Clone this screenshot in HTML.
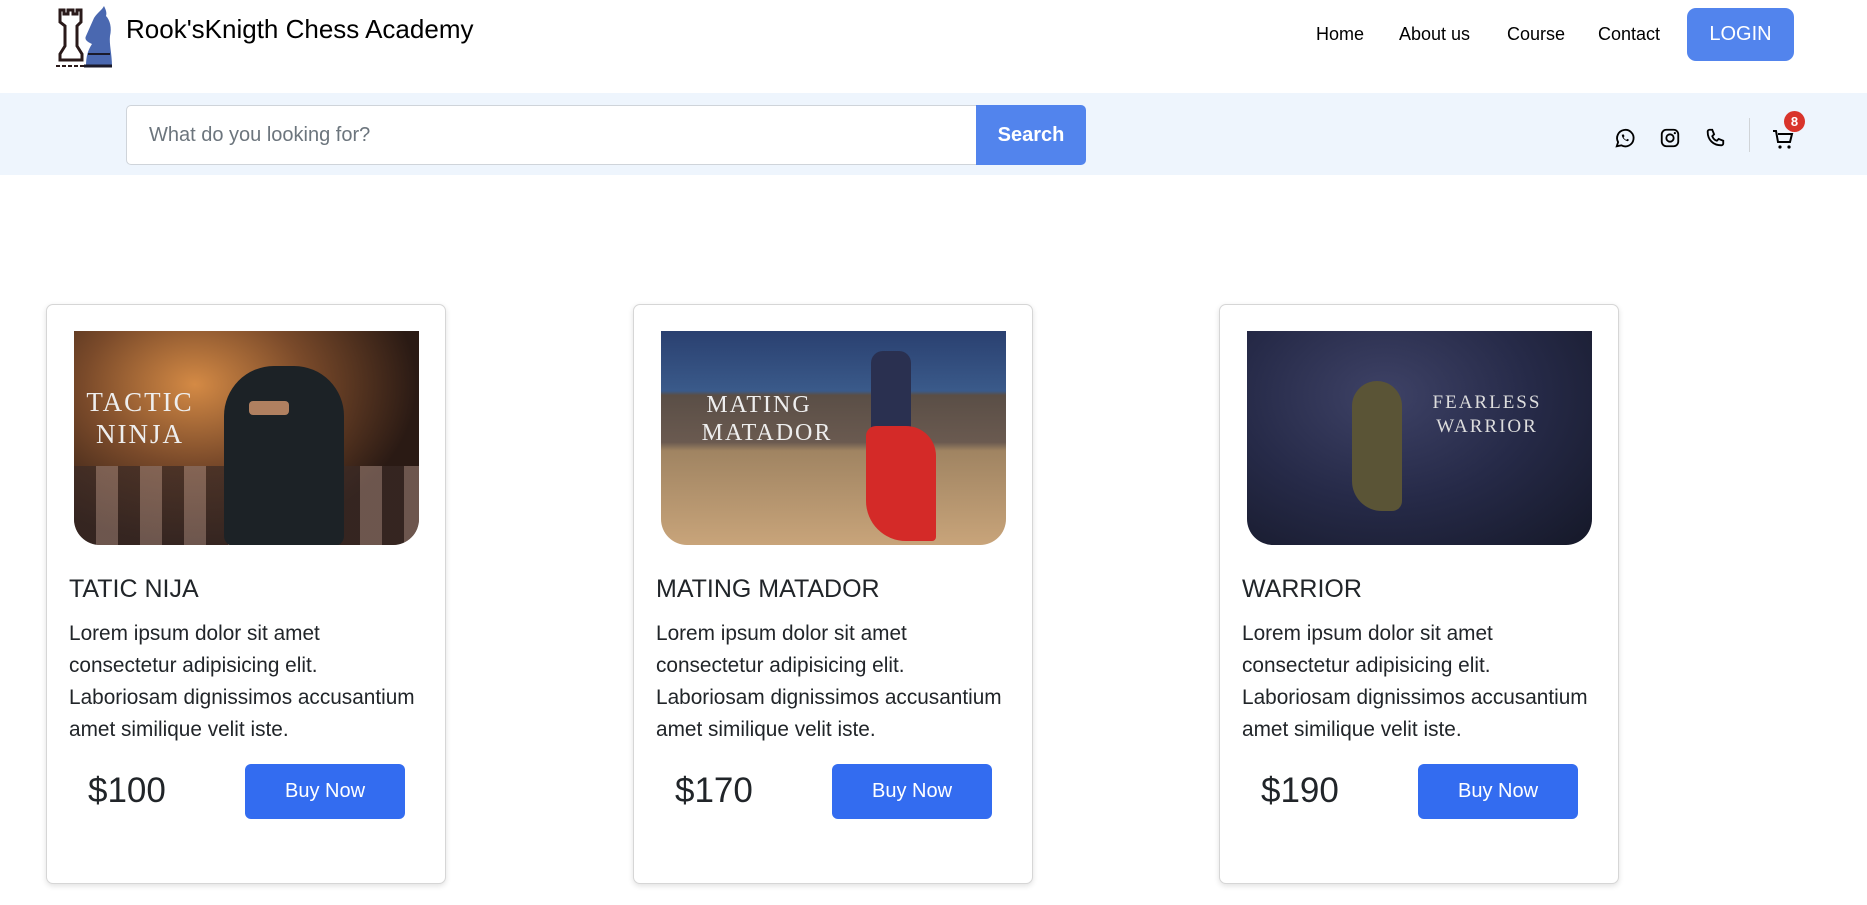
<!DOCTYPE html>
<html><head><meta charset="utf-8"><style>
*{margin:0;padding:0;box-sizing:border-box}
body{width:1867px;height:905px;background:#fff;font-family:"Liberation Sans",sans-serif;position:relative;overflow:hidden;color:#212529}
.a{position:absolute}
.nav{font-size:18px;color:#000;top:24px}
.band{left:0;top:93px;width:1867px;height:82px;background:#eef5fd}
.card{width:400px;height:580px;top:304px;border:1px solid #d6d6d6;border-radius:7px;box-shadow:0 2px 6px rgba(0,0,0,.12);background:#fff}
.img{left:27px;top:26px;width:345px;height:214px;border-radius:0 0 26px 26px;overflow:hidden}
.t{left:22px;top:270px;font-size:25px;color:#212529}
.p{left:22px;top:313px;font-size:20.8px;line-height:32px;white-space:nowrap}
.pr{left:41px;top:466px;font-size:35px}
.btn{left:198px;top:459px;width:160px;height:55px;background:#336cf0;border-radius:6px;color:#fff;font-size:20px;text-align:center;line-height:55px}
.it{font-family:"Liberation Serif",serif;color:#eee;text-align:center;letter-spacing:2px}
</style></head><body>
<svg class="a" style="left:54px;top:4px" width="60" height="64" viewBox="0 0 60 64">
<path d="M6 6h4v4h4V6h5v4h4V6h4v12l-4 4v20l5 8v6H6v-6l5-8V22l-5-4z" fill="none" stroke="#2a1a1a" stroke-width="3"/>
<path d="M2 62h30" stroke="#2a1a1a" stroke-width="2" stroke-dasharray="4 2"/>
<path d="M32 62c0-10 2-16 6-22-4-2-8-4-6-8l8-18c4-6 8-8 10-12 2 4 3 7 2 10 4 4 6 12 4 20-1 8 2 18 2 30z" fill="#4a68b0"/>
<path d="M34 50h22" stroke="#1a1a2a" stroke-width="2"/>
<path d="M30 62h28" stroke="#1a1a2a" stroke-width="3"/>
</svg>
<div class="a" style="left:126px;top:14px;font-size:26px;color:#000">Rook'sKnigth Chess Academy</div>
<div class="a nav" style="left:1316px">Home</div>
<div class="a nav" style="left:1399px">About us</div>
<div class="a nav" style="left:1507px">Course</div>
<div class="a nav" style="left:1598px">Contact</div>
<div class="a" style="left:1687px;top:8px;width:107px;height:53px;background:#5284ed;border-radius:9px;color:#fff;font-size:20px;text-align:center;line-height:53px">LOGIN</div>
<div class="a band"></div>
<div class="a" style="left:126px;top:105px;width:851px;height:60px;background:#fff;border:1px solid #cfd4da;border-radius:5px 0 0 5px;font-size:20px;color:#6c757d;line-height:58px;padding-left:22px">What do you looking for?</div>
<div class="a" style="left:976px;top:105px;width:110px;height:60px;background:#5284ed;border-radius:0 5px 5px 0;color:#fff;font-size:20px;font-weight:bold;text-align:center;line-height:60px">Search</div>
<svg class="a" style="left:1614px;top:127px" width="22" height="22" viewBox="0 0 24 24"><path d="M3 21l1.5-4.5A9 9 0 1 1 8 20z" fill="none" stroke="#000" stroke-width="2"/><path d="M8.5 8.5c0 3 3 6.5 6.5 7l1.5-1.5-2-1-1 1c-1.5-.5-2.5-1.5-3-3l1-1-1-2z" fill="#000"/></svg>
<svg class="a" style="left:1659px;top:127px" width="22" height="22" viewBox="0 0 24 24"><rect x="3" y="3" width="18" height="18" rx="5" fill="none" stroke="#000" stroke-width="2"/><circle cx="12" cy="12" r="4" fill="none" stroke="#000" stroke-width="2"/><circle cx="17.3" cy="6.7" r="1.2"/></svg>
<svg class="a" style="left:1704px;top:127px" width="22" height="22" viewBox="0 0 24 24"><path d="M6 3l3 0 2 5-2 2c1 2.5 3 4.5 5 5l2-2 5 2v3c0 1-1 2-2 2C10 20 4 14 4 5c0-1 1-2 2-2z" fill="none" stroke="#000" stroke-width="2"/></svg>
<div class="a" style="left:1749px;top:118px;width:1px;height:34px;background:#d0d4d8"></div>
<svg class="a" style="left:1771px;top:127px" width="24" height="24" viewBox="0 0 24 24"><path d="M2 4h3l2 11h12l2-8H7" fill="none" stroke="#000" stroke-width="2"/><circle cx="9" cy="20" r="1.6"/><circle cx="18" cy="20" r="1.6"/></svg>
<div class="a" style="left:1784px;top:111px;width:21px;height:21px;border-radius:50%;background:#d9342b;color:#fff;font-size:13px;font-weight:bold;text-align:center;line-height:21px">8</div>

<div class="a card" style="left:46px">
 <div class="a img" style="background:radial-gradient(ellipse at 35% 25%,#d48a45 0%,#7a4a2a 35%,#2a1a14 70%),#2a1a14">
  <div class="a" style="left:0;top:135px;width:345px;height:79px;background:repeating-linear-gradient(90deg,#3a2a26 0 22px,#8a7066 22px 44px);opacity:.7"></div>
  <div class="a" style="left:150px;top:35px;width:120px;height:180px;background:#1c2226;border-radius:50px 50px 10px 10px"></div>
  <div class="a" style="left:175px;top:70px;width:40px;height:14px;background:#b08060;border-radius:4px"></div>
  <div class="a it" style="left:6px;top:55px;width:120px;font-size:27px;line-height:32px">TACTIC<br>NINJA</div>
 </div>
 <div class="a t">TATIC NIJA</div>
 <div class="a p">Lorem ipsum dolor sit amet<br>consectetur adipisicing elit.<br>Laboriosam dignissimos accusantium<br>amet similique velit iste.</div>
 <div class="a pr">$100</div>
 <div class="a btn">Buy Now</div>
</div>

<div class="a card" style="left:633px">
 <div class="a img" style="background:linear-gradient(#2a4070 0%,#3a5a8a 28%,#5a4e46 30%,#6a5a50 52%,#a08462 56%,#c8a47a 100%)">
  <div class="a" style="left:210px;top:20px;width:40px;height:130px;background:#2a3050;border-radius:12px"></div>
  <div class="a" style="left:205px;top:95px;width:70px;height:115px;background:#d42a28;border-radius:10px 30px 4px 40px"></div>
  <div class="a it" style="left:8px;top:60px;width:180px;font-size:24px;line-height:28px">MATING<br>&nbsp;&nbsp;MATADOR</div>
 </div>
 <div class="a t">MATING MATADOR</div>
 <div class="a p">Lorem ipsum dolor sit amet<br>consectetur adipisicing elit.<br>Laboriosam dignissimos accusantium<br>amet similique velit iste.</div>
 <div class="a pr">$170</div>
 <div class="a btn">Buy Now</div>
</div>

<div class="a card" style="left:1219px">
 <div class="a img" style="background:radial-gradient(ellipse at 40% 30%,#3e4266 0%,#262a48 50%,#151828 100%)">
  <div class="a" style="left:105px;top:50px;width:50px;height:130px;background:#5a5436;border-radius:25px 25px 10px 30px"></div>
  <div class="a it" style="left:170px;top:60px;width:140px;font-size:19px;line-height:24px;color:#ddd">FEARLESS<br>WARRIOR</div>
 </div>
 <div class="a t">WARRIOR</div>
 <div class="a p">Lorem ipsum dolor sit amet<br>consectetur adipisicing elit.<br>Laboriosam dignissimos accusantium<br>amet similique velit iste.</div>
 <div class="a pr">$190</div>
 <div class="a btn">Buy Now</div>
</div>
</body></html>
